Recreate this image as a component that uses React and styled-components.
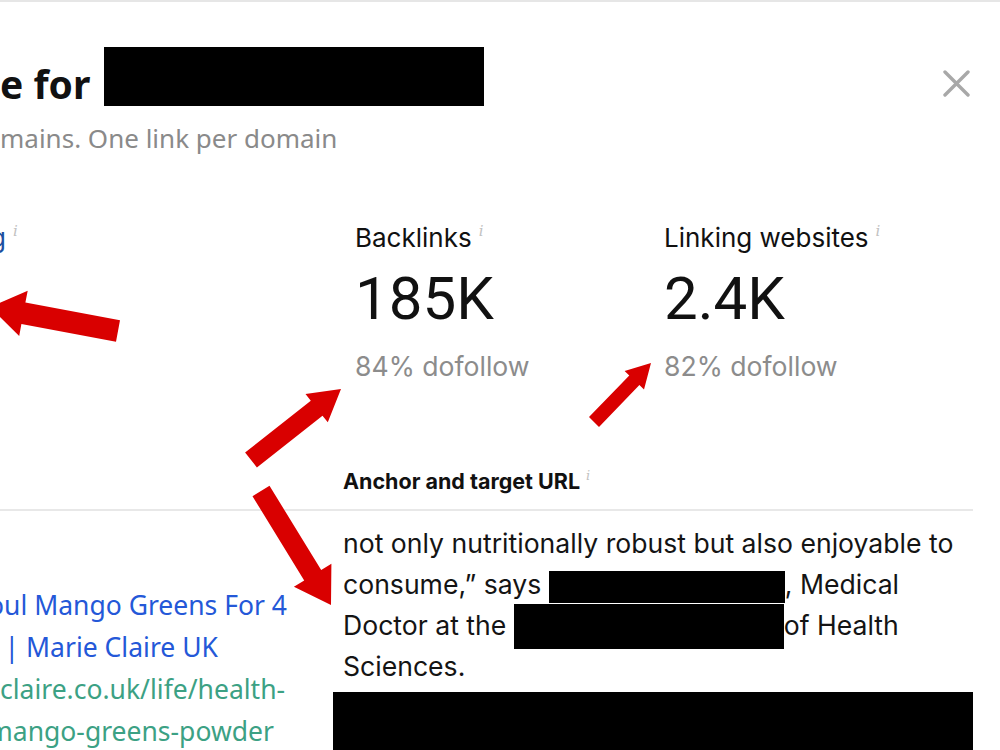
import React from 'react'
import styled, { createGlobalStyle } from 'styled-components'

const GlobalStyle = createGlobalStyle`
  html, body {
    margin: 0;
    padding: 0;
    background: #fff;
  }
  body {
    overflow: hidden;
  }
`

// red call-out arrows: shaft from tail to the head's base, then the head
const arrowPoints = ({ from, to, shaft, headLen, headW }) => {
  const [x1, y1] = from
  const [x2, y2] = to
  const len = Math.hypot(x2 - x1, y2 - y1)
  const ux = (x2 - x1) / len
  const uy = (y2 - y1) / len
  const px = -uy
  const py = ux
  const bx = x2 - ux * headLen
  const by = y2 - uy * headLen
  const s = shaft / 2
  const h = headW / 2
  return [
    [x1 + px * s, y1 + py * s],
    [bx + px * s, by + py * s],
    [bx + px * h, by + py * h],
    [x2, y2],
    [bx - px * h, by - py * h],
    [bx - px * s, by - py * s],
    [x1 - px * s, y1 - py * s],
  ]
    .map((p) => p.map((v) => v.toFixed(1)).join(','))
    .join(' ')
}

const arrows = [
  { from: [118, 329], to: [-10, 305], shaft: 22, headLen: 34, headW: 46 },
  { from: [251, 458], to: [341, 387], shaft: 19, headLen: 31, headW: 36 },
  { from: [594, 420], to: [651, 361], shaft: 14, headLen: 24, headW: 27 },
  { from: [261, 489], to: [331, 603], shaft: 20, headLen: 35, headW: 44 },
]

const metrics = [
  { label: 'Backlinks', value: '185K', sub: '84% dofollow' },
  { label: 'Linking websites', value: '2.4K', sub: '82% dofollow' },
]

const App = () => {
  return (
    <Page>
      <GlobalStyle />
      <Modal>
        <Header>
          <TitleRow>
            <Title>e for</Title>
            <Redacted $w={380} $h={59} />
          </TitleRow>
          <Close aria-label="Close">
            <svg width="27" height="27" viewBox="0 0 27 27">
              <path d="M2 2 L25 25 M25 2 L2 25" stroke="#a8a8a8" strokeWidth="3.4" strokeLinecap="round" />
            </svg>
          </Close>
        </Header>
        <Subtitle>mains. One link per domain</Subtitle>

        <Metrics>
          <Metric>
            <Label $link $shift={-10}>
              g<Info>i</Info>
            </Label>
          </Metric>
          {metrics.map((m) => (
            <Metric key={m.label}>
              <Label>
                {m.label}
                <Info>i</Info>
              </Label>
              <Value>{m.value}</Value>
              <Sub>{m.sub}</Sub>
            </Metric>
          ))}
        </Metrics>

        <Table>
          <HeadRow>
            <HeadCell />
            <HeadCell>
              Anchor and target URL<Info $small>i</Info>
            </HeadCell>
          </HeadRow>
          <BodyRow>
            <PageCell>
              <TitleLine $shift={-12}>oul Mango Greens For 4</TitleLine>
              <TitleLine $shift={-15}>s | Marie Claire UK</TitleLine>
              <UrlLine $shift={0}>claire.co.uk/life/health-</UrlLine>
              <UrlLine $shift={-12}>mango-greens-powder</UrlLine>
            </PageCell>
            <AnchorCell>
              <Anchor>
                not only nutritionally robust but also enjoyable to
                <br />
                consume,” says <InlineRedacted $w={236} $h={32} $drop={9} $trim={0} />, Medical
                <br />
                Doctor at the <InlineRedacted $w={270} $h={45} $drop={10} $trim={4} />of Health
                <br />
                Sciences.
              </Anchor>
              <Redacted $w={640} $h={70} />
            </AnchorCell>
          </BodyRow>
        </Table>
      </Modal>

      <Callouts width="1000" height="750" viewBox="0 0 1000 750">
        {arrows.map((a, i) => (
          <polygon key={i} points={arrowPoints(a)} fill="#d90000" />
        ))}
      </Callouts>
    </Page>
  )
}

export default App

const Page = styled.div`
  position: relative;
  width: 1000px;
  height: 750px;
  overflow: hidden;
  box-sizing: border-box;
  border-top: 2px solid #e6e6e6;
  background: #fff;
  font-family: Inter, Roboto, "Liberation Sans", sans-serif;
  color: #111;
`

const Modal = styled.div`
  width: 973px;
`

const Header = styled.header`
  display: flex;
  justify-content: space-between;
  align-items: flex-start;
  padding-top: 45px;
`

const TitleRow = styled.div`
  display: flex;
  align-items: flex-start;
  gap: 14px;
`

const Title = styled.h1`
  margin: 13px 0 0;
  font: 700 39px/48px "Noto Sans", sans-serif;
  color: #111;
  white-space: nowrap;
`

const Redacted = styled.div`
  width: ${({ $w }) => $w}px;
  height: ${({ $h }) => $h}px;
  background: #000;
  flex: none;
`

const Close = styled.button`
  margin: 23px 3px 0 0;
  padding: 0;
  border: 0;
  background: none;
  line-height: 0;
  cursor: pointer;
`

const Subtitle = styled.p`
  margin: 13px 0 0;
  font: 400 26px/34px "Noto Sans", sans-serif;
  color: #8a8a8a;
  white-space: nowrap;
`

const Metrics = styled.div`
  display: grid;
  grid-template-columns: 355px 309px 1fr;
  margin-top: 67px;
`

const Metric = styled.div`
  display: flex;
  flex-direction: column;
  align-items: flex-start;
`

const Label = styled.div`
  display: flex;
  align-items: flex-start;
  margin-left: ${({ $shift }) => $shift || 0}px;
  font-size: 26px;
  line-height: 32px;
  color: ${({ $link }) => ($link ? '#1d4fa0' : '#111')};
  white-space: nowrap;
`

const Info = styled.span`
  margin-left: ${({ $small }) => ($small ? 6 : 7)}px;
  margin-top: ${({ $small }) => ($small ? 1 : 2)}px;
  font: italic 400 ${({ $small }) => ($small ? 13 : 15)}px/1 "DejaVu Serif", serif;
  color: #c2c2c2;
`

const Value = styled.div`
  margin-top: 10px;
  font-family: Roboto, "Liberation Sans", sans-serif;
  font-size: 60px;
  line-height: 70px;
  font-weight: 400;
  color: #111;
`

const Sub = styled.div`
  margin-top: 16px;
  font-size: 26.6px;
  line-height: 32px;
  color: #8c8c8c;
`

const Table = styled.div`
  margin-top: 86px;
`

const HeadRow = styled.div`
  display: grid;
  grid-template-columns: 343px 1fr;
  padding-bottom: 15px;
  border-bottom: 2px solid #e8e8e8;
`

const HeadCell = styled.div`
  display: flex;
  align-items: flex-start;
  font-size: 21.5px;
  line-height: 26px;
  font-weight: 700;
  color: #111;
`

const BodyRow = styled.div`
  display: grid;
  grid-template-columns: 343px 1fr;
`

const PageCell = styled.div`
  padding-top: 73px;
  display: flex;
  flex-direction: column;
  font: 400 26.5px/42px "Noto Sans", sans-serif;
  white-space: nowrap;
  overflow: hidden;
`

const TitleLine = styled.span`
  margin-left: ${({ $shift }) => $shift}px;
  color: #2458d8;
`

const UrlLine = styled.span`
  margin-left: ${({ $shift }) => $shift}px;
  color: #3ca184;
`

const AnchorCell = styled.div`
  padding-top: 12px;
  display: flex;
  flex-direction: column;
  gap: 5px;
  margin-left: -10px;
`

const Anchor = styled.p`
  margin: 0 0 0 10px;
  font-size: 26.6px;
  line-height: 41px;
  color: #141414;
  white-space: nowrap;
`

const InlineRedacted = styled.span`
  display: inline-block;
  width: ${({ $w }) => $w}px;
  height: ${({ $h }) => $h}px;
  margin: -${({ $trim }) => $trim}px 0;
  vertical-align: -${({ $drop }) => $drop}px;
  background: #000;
`

const Callouts = styled.svg`
  position: absolute;
  top: 0;
  left: 0;
  pointer-events: none;
`
